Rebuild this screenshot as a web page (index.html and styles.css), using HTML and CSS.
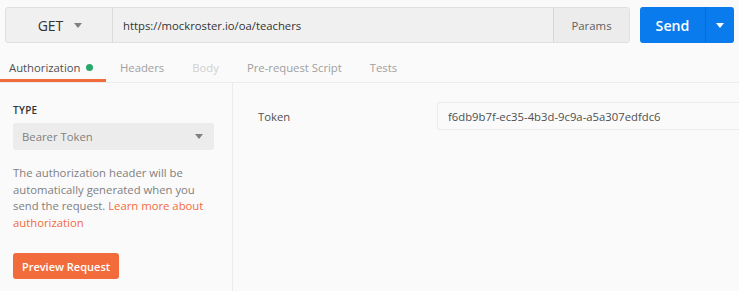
FILE: index.html
```html
<!DOCTYPE html>
<html lang="en">
<head>
    <meta charset="UTF-8">
    <meta name="viewport" content="width=device-width, initial-scale=1.0">
    <title>Authorization</title>
    <link rel="stylesheet" href="styles.css">
</head>
<body>
    <!-- request bar -->
    <div class="request-bar">
        <div class="url-group">
            <div class="method">GET <span class="caret"></span></div>
            <div class="url">https://mockroster.io/oa/teachers</div>
            <div class="params">Params</div>
        </div>
        <div class="send">
            <span class="send-label">Send</span>
            <span class="send-menu"><span class="caret caret-white"></span></span>
        </div>
    </div>

    <!-- tabs -->
    <div class="tabs">
        <div class="tab active">Authorization <span class="dot"></span></div>
        <div class="tab">Headers</div>
        <div class="tab disabled">Body</div>
        <div class="tab">Pre-request Script</div>
        <div class="tab">Tests</div>
    </div>

    <div class="panes">
        <div class="auth-side">
            <div class="type-label">TYPE</div>
            <div class="type-select">Bearer Token <span class="caret"></span></div>
            <p class="help">The authorization header will be automatically generated when you send the request. <a href="#">Learn more about authorization</a></p>
            <button class="preview">Preview Request</button>
        </div>
        <div class="auth-main">
            <div class="field">
                <div class="field-label">Token</div>
                <div class="field-input">f6db9b7f-ec35-4b3d-9c9a-a5a307edfdc6</div>
            </div>
        </div>
    </div>
</body>
</html>
```

FILE: styles.css
```css
body {
    margin: 0;
    background: #fafafa;
    font-family: "Open Sans", "Noto Sans", sans-serif;
    color: #505050;
    overflow: hidden;
}

.request-bar {
    display: flex;
    align-items: stretch;
    padding: 7px 5px 0 5px;
    height: 36px;
}
.url-group {
    display: flex;
    width: 625px;
    border: 1px solid #e0e0e0;
    border-radius: 3px;
    background: #f0f0f0;
    box-sizing: border-box;
}
.method {
    width: 107px;
    display: flex;
    align-items: center;
    justify-content: center;
    gap: 11px;
    font-size: 14px;
    color: #333;
    border-right: 1px solid #dcdcdc;
    padding-left: 2px;
    box-sizing: border-box;
}
.url {
    flex: 1;
    display: flex;
    align-items: center;
    padding-left: 10px;
    font-size: 11.3px;
    color: #333;
    border-right: 1px solid #d6d6d6;
}
.params {
    width: 75px;
    display: flex;
    align-items: center;
    justify-content: center;
    font-size: 11.4px;
    color: #606060;
    background: #ececec;
}
.caret {
    display: inline-block;
    width: 0;
    height: 0;
    border-left: 4px solid transparent;
    border-right: 4px solid transparent;
    border-top: 5px solid #808080;
}
.caret-white {
    border-top-color: #fff;
}
.send {
    margin-left: 10px;
    width: 94px;
    display: flex;
    background: #097bed;
    border-radius: 3px;
    color: #fff;
}
.send-label {
    flex: 1;
    display: flex;
    align-items: center;
    justify-content: center;
    font-size: 14.2px;
    font-weight: 600;
}
.send-menu {
    width: 28px;
    display: flex;
    align-items: center;
    justify-content: center;
    border-left: 1px solid #0a6ad0;
}

.tabs {
    display: flex;
    margin-top: 10px;
    height: 29px;
    border-bottom: 1px solid #ececec;
}
.tab {
    padding: 0 14px;
    font-size: 11.3px;
    color: #a0a0a0;
    display: flex;
    align-items: center;
    height: 29px;
    box-sizing: border-box;
}
.tab.active {
    width: 106px;
    color: #505050;
    border-bottom: 3px solid #f26b3a;
    padding: 2px 0 0 9px;
    gap: 6px;
}
.tab.disabled {
    color: #d0d0d0;
}
.dot {
    width: 7px;
    height: 7px;
    border-radius: 50%;
    background: #2aa86c;
}

.panes {
    display: flex;
    height: 208px;
}
.auth-side {
    width: 233px;
    border-right: 1px solid #ececec;
    padding: 20px 18px 0 13px;
    box-sizing: border-box;
}
.type-label {
    font-size: 10px;
    font-weight: 600;
    color: #333;
    letter-spacing: 0.3px;
}
.type-select {
    margin-top: 6px;
    height: 27px;
    background: #ececec;
    border-radius: 3px;
    display: flex;
    align-items: center;
    justify-content: space-between;
    padding: 0 11px 0 9px;
    font-size: 11.3px;
    color: #808080;
}
.help {
    margin: 15px 0 0 0;
    font-size: 11.3px;
    line-height: 16.5px;
    color: #808080;
}
.help a {
    color: #f26b3a;
    text-decoration: none;
}
.preview {
    margin-top: 22px;
    background: #f26b3a;
    color: #fff;
    border: none;
    border-radius: 3px;
    font-family: inherit;
    font-size: 11px;
    font-weight: 600;
    height: 26px;
    width: 106px;
    padding: 0;
}

.auth-main {
    flex: 1;
    padding: 19px 0 0 25px;
}
.field {
    display: flex;
    align-items: center;
}
.field-label {
    width: 179px;
    font-size: 11.3px;
    color: #505050;
}
.field-input {
    flex: 1;
    height: 28px;
    border: 1px solid #ececec;
    border-right: none;
    border-radius: 3px 0 0 3px;
    background: #fafafa;
    display: flex;
    align-items: center;
    padding-left: 10px;
    font-size: 11.3px;
    color: #505050;
    box-sizing: border-box;
}
```
